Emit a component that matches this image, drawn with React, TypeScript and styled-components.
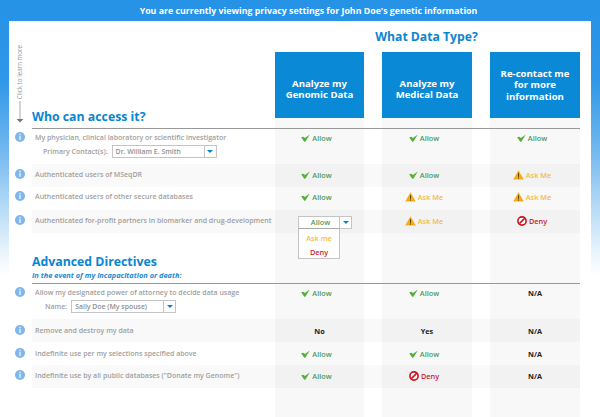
import React from "react";
import styled, { createGlobalStyle } from "styled-components";

const GlobalStyle = createGlobalStyle`
  html, body {
    margin: 0;
    padding: 0;
    background: #fff;
    font-family: "Open Sans", "Noto Sans", "Liberation Sans", sans-serif;
  }
`;

const Frame = styled.div`
  width: 600px;
  height: 417px;
  overflow: hidden;
  padding-top: 1px;
  box-sizing: border-box;
  background: linear-gradient(
    to bottom,
    #2592e6 0,
    #2f97e8 80px,
    #72b8ef 150px,
    #b9dcf7 210px,
    #e6f3fc 250px,
    #ffffff 275px
  );
`;

const TopBar = styled.div`
  height: 20px;
  display: flex;
  align-items: center;
  justify-content: center;
  padding-left: 17px;
  color: #fff;
  font-size: 8.8px;
  font-weight: 700;
`;

const stripes = `linear-gradient(to right,
  transparent 266px, #f8f8f8 266px, #f8f8f8 355px,
  transparent 355px, transparent 373px, #f8f8f8 373px, #f8f8f8 463px,
  transparent 463px, transparent 481px, #f8f8f8 481px, #f8f8f8 571px,
  transparent 571px)`;

const Panel = styled.div`
  margin: 0 9px;
  height: 396px;
  background-color: #fff;
  background-image: ${stripes};
  background-repeat: no-repeat;
  background-position: 0 97px;
`;

const Header = styled.div`
  display: flex;
  height: 107px;
`;

const HintGutter = styled.div`
  width: 23px;
  display: flex;
  flex-direction: column;
  align-items: center;
  padding-top: 24px;
  margin-left: -1px;
  margin-right: 1px;
`;

const HintText = styled.span`
  writing-mode: vertical-rl;
  transform: rotate(180deg);
  font-size: 6.2px;
  line-height: 7px;
  color: #9a9a9a;
  white-space: nowrap;
`;

const TitleCell = styled.div`
  width: 243px;
  display: flex;
  align-items: flex-end;
  padding-bottom: 3px;
`;

const Title = styled.h2`
  margin: 0;
  font-size: 12.3px;
  line-height: 16px;
  font-weight: 700;
  color: #0b85cf;
  white-space: nowrap;
`;

const DataColumns = styled.div`
  width: 305px;
  display: flex;
  flex-direction: column;
`;

const DataHeading = styled.div`
  height: 31px;
  display: flex;
  align-items: center;
  justify-content: center;
  padding-right: 2px;
  font-size: 12.2px;
  font-weight: 700;
  color: #0b85cf;
`;

const DataBoxes = styled.div`
  display: grid;
  grid-template-columns: 89px 90px 90px;
  column-gap: 18px;
`;

const DataBox = styled.div<{ $lower?: boolean }>`
  height: 66px;
  box-sizing: border-box;
  padding-top: ${({ $lower }) => ($lower ? 8 : 0)}px;
  display: flex;
  align-items: center;
  justify-content: center;
  text-align: center;
  background: #0a8ad6;
  color: #fff;
  font-size: 9.6px;
  line-height: 11.5px;
  font-weight: 700;
`;

const Rule = styled.div`
  margin: 0 11px 0 23px;
  height: 1px;
  background: #989898;
`;

const Line = styled.div`
  display: flex;
`;

const InfoGutter = styled.div<{ $top: number }>`
  width: 23px;
  display: flex;
  justify-content: center;
  padding-top: ${({ $top }) => $top}px;
  margin-left: -1px;
  margin-right: 1px;
`;

const RowGrid = styled.div<{ $shaded?: boolean; $height: number }>`
  display: grid;
  grid-template-columns: 243px 89px 108px 108px;
  width: 548px;
  height: ${({ $height }) => $height}px;
  background: ${({ $shaded }) =>
    $shaded ? "rgba(0, 0, 0, 0.025)" : "transparent"};

  & > :nth-child(3),
  & > :nth-child(4) {
    margin-left: 18px;
  }
`;

const LabelCell = styled.div<{ $top: number }>`
  padding: ${({ $top }) => $top}px 0 0 3px;
  font-size: 7px;
  line-height: 12px;
  font-weight: 600;
  color: #a0a0a0;
  white-space: nowrap;
`;

const ContactRow = styled.div<{ $indent: number }>`
  display: flex;
  align-items: center;
  gap: 4px;
  padding-left: ${({ $indent }) => $indent}px;
  margin-top: 1px;
`;

const Select = styled.div<{ $width: number }>`
  display: flex;
  width: ${({ $width }) => $width}px;
  height: 13px;
  box-sizing: border-box;
  border: 1px solid #c4c4c4;
  background: #fff;
  font-size: 6.9px;
  line-height: 11px;
  color: #8f8f8f;
`;

const SelectValue = styled.div`
  flex: 1;
  padding-left: 3px;
`;

const SelectArrow = styled.div`
  width: 11px;
  display: flex;
  align-items: center;
  justify-content: center;
  border-left: 1px solid #c4c4c4;
  &::before {
    content: "";
    border-style: solid;
    border-width: 3px 3.5px 0;
    border-color: #0a80cc transparent transparent;
  }
`;

const Cell = styled.div<{ $top: number }>`
  position: relative;
  display: flex;
  justify-content: center;
  align-items: flex-start;
  padding-top: ${({ $top }) => $top}px;
  font-size: 7.3px;
  line-height: 12px;
  font-weight: 600;
`;

const tones = {
  allow: "#4f9a5b",
  ask: "#f6bb42",
  deny: "#c9202f",
};

const Status = styled.span<{ $tone: keyof typeof tones }>`
  display: inline-flex;
  align-items: center;
  gap: 2px;
  margin-right: 6px;
  color: ${({ $tone }) => tones[$tone]};
`;

const Plain = styled.span`
  color: #222;
  font-weight: 700;
`;

const Dropdown = styled.div`
  position: absolute;
  left: 23px;
  top: 6px;
  z-index: 2;
  display: flex;
  flex-direction: column;
  width: 54px;
`;

const DropdownHead = styled.div`
  display: flex;
  height: 13px;
  box-sizing: border-box;
  border: 1px solid #c4c4c4;
  background: #fff;
  color: #4f9a5b;
  line-height: 11px;
  text-align: center;
`;

const DropdownList = styled.div`
  width: 42px;
  height: 31px;
  margin-top: -1px;
  box-sizing: border-box;
  border: 1px solid #c4c4c4;
  border-top-color: #aaa;
  background: #fff;
  text-align: center;
  padding-top: 2px;
`;

const DropdownItem = styled.div<{ $color: string }>`
  height: 14px;
  line-height: 14px;
  color: ${({ $color }) => $color};
`;

const Section = styled.div`
  margin-left: 23px;
  height: 50px;
  display: flex;
  flex-direction: column;
  justify-content: flex-end;
  padding-bottom: 3px;
  box-sizing: border-box;
`;

const SectionNote = styled.div`
  font-size: 7.4px;
  line-height: 10px;
  font-style: italic;
  font-weight: 700;
  color: #1a8ad0;
`;

const InfoIcon = () => (
  <svg width="10" height="10" viewBox="0 0 10 10">
    <circle cx="5" cy="5" r="5" fill="#7fb6ec" />
    <rect x="4.3" y="1.8" width="1.4" height="1.2" fill="#e8f2fc" />
    <rect x="4.3" y="3.7" width="1.4" height="4.2" fill="#e8f2fc" />
  </svg>
);

const CheckIcon = () => (
  <svg width="9" height="8" viewBox="0 0 9 8">
    <path d="M0.2 3.2 L2.4 2.7 L3.9 4 L8.8 0.4 L4.3 7.8 L3.2 7.8 Z" fill="#55b03a" />
  </svg>
);

const WarnIcon = () => (
  <svg width="11" height="10" viewBox="0 0 11 10">
    <path d="M5.5 0.3 L10.8 9.6 L0.2 9.6 Z" fill="#f4ad16" />
    <rect x="5" y="3.2" width="1" height="3.6" fill="#5a3a05" />
    <rect x="5" y="7.5" width="1" height="1.1" fill="#5a3a05" />
  </svg>
);

const DenyIcon = () => (
  <svg width="10" height="10" viewBox="0 0 10 10">
    <circle cx="5" cy="5" r="4.1" fill="#fff" stroke="#c9141f" strokeWidth="1.6" />
    <path d="M2.4 7.6 L7.6 2.4" stroke="#c9141f" strokeWidth="1.6" />
  </svg>
);

const HintArrow = () => (
  <svg width="8" height="26" viewBox="0 0 8 26">
    <path d="M4 2 V21" stroke="#a8a8a8" strokeWidth="1" />
    <path d="M0.5 20 H7.5 L4 23.5 Z" fill="#777" />
  </svg>
);

type Value = "allow" | "ask" | "deny" | "no" | "yes" | "na" | "dropdown";

const StatusCell: React.FC<{ value: Value; top: number }> = ({ value, top }) => {
  switch (value) {
    case "allow":
      return (
        <Cell $top={top}>
          <Status $tone="allow">
            <CheckIcon />
            Allow
          </Status>
        </Cell>
      );
    case "ask":
      return (
        <Cell $top={top}>
          <Status $tone="ask">
            <WarnIcon />
            Ask Me
          </Status>
        </Cell>
      );
    case "deny":
      return (
        <Cell $top={top}>
          <Status $tone="deny">
            <DenyIcon />
            Deny
          </Status>
        </Cell>
      );
    case "dropdown":
      return (
        <Cell $top={top}>
          <Dropdown>
            <DropdownHead>
              <SelectValue>Allow</SelectValue>
              <SelectArrow />
            </DropdownHead>
            <DropdownList>
              <DropdownItem $color={tones.ask}>Ask me</DropdownItem>
              <DropdownItem $color={tones.deny}>Deny</DropdownItem>
            </DropdownList>
          </Dropdown>
        </Cell>
      );
    default:
      return (
        <Cell $top={top}>
          <Plain>{value === "na" ? "N/A" : value === "no" ? "No" : "Yes"}</Plain>
        </Cell>
      );
  }
};

interface RowData {
  label: string;
  values: [Value, Value, Value];
  shaded?: boolean;
  height: number;
  top: number;
  contact?: { label: string; value: string; indent: number; width: number };
}

const accessRows: RowData[] = [
  {
    label: "My physician, clinical laboratory or scientific investigator",
    values: ["allow", "allow", "allow"],
    height: 35,
    top: 3,
    contact: { label: "Primary Contact(s):", value: "Dr. William E. Smith", indent: 8, width: 105 },
  },
  {
    label: "Authenticated users of MSeqDR",
    values: ["allow", "allow", "ask"],
    shaded: true,
    height: 23,
    top: 5,
  },
  {
    label: "Authenticated users of other secure databases",
    values: ["allow", "ask", "ask"],
    height: 23,
    top: 4,
  },
  {
    label: "Authenticated for-profit partners in biomarker and drug-development",
    values: ["dropdown", "ask", "deny"],
    shaded: true,
    height: 23,
    top: 5,
  },
];

const directiveRows: RowData[] = [
  {
    label: "Allow my designated power of attorney to decide data usage",
    values: ["allow", "allow", "na"],
    height: 35,
    top: 3,
    contact: { label: "Name:", value: "Sally Doe (My spouse)", indent: 10, width: 105 },
  },
  {
    label: "Remove and destroy my data",
    values: ["no", "yes", "na"],
    shaded: true,
    height: 23,
    top: 6,
  },
  {
    label: "Indefinite use per my selections specified above",
    values: ["allow", "allow", "na"],
    height: 23,
    top: 6,
  },
  {
    label: "Indefinite use by all public databases (\"Donate my Genome\")",
    values: ["allow", "deny", "na"],
    shaded: true,
    height: 23,
    top: 5,
  },
];

const Row: React.FC<{ row: RowData }> = ({ row }) => (
  <Line>
    <InfoGutter $top={row.top}>
      <InfoIcon />
    </InfoGutter>
    <RowGrid $shaded={row.shaded} $height={row.height}>
      <LabelCell $top={row.top}>
        {row.label}
        {row.contact && (
          <ContactRow $indent={row.contact.indent}>
            {row.contact.label}
            <Select $width={row.contact.width}>
              <SelectValue>{row.contact.value}</SelectValue>
              <SelectArrow />
            </Select>
          </ContactRow>
        )}
      </LabelCell>
      {row.values.map((value, i) => (
        <StatusCell key={i} value={value} top={row.top} />
      ))}
    </RowGrid>
  </Line>
);

export default function App() {
  return (
    <>
      <GlobalStyle />
      <Frame>
        <TopBar>You are currently viewing privacy settings for John Doe's genetic information</TopBar>
        <Panel>
          <Header>
            <HintGutter>
              <HintText>Click to learn more</HintText>
              <HintArrow />
            </HintGutter>
            <TitleCell>
              <Title>Who can access it?</Title>
            </TitleCell>
            <DataColumns>
              <DataHeading>What Data Type?</DataHeading>
              <DataBoxes>
                <DataBox $lower>Analyze my<br />Genomic Data</DataBox>
                <DataBox $lower>Analyze my<br />Medical Data</DataBox>
                <DataBox>Re-contact me<br />for more<br />information</DataBox>
              </DataBoxes>
            </DataColumns>
          </Header>
          <Rule />
          {accessRows.map((row) => (
            <Row key={row.label} row={row} />
          ))}
          <Section>
            <Title>Advanced Directives</Title>
            <SectionNote>In the event of my incapacitation or death:</SectionNote>
          </Section>
          <Rule />
          {directiveRows.map((row) => (
            <Row key={row.label} row={row} />
          ))}
        </Panel>
      </Frame>
    </>
  );
}
